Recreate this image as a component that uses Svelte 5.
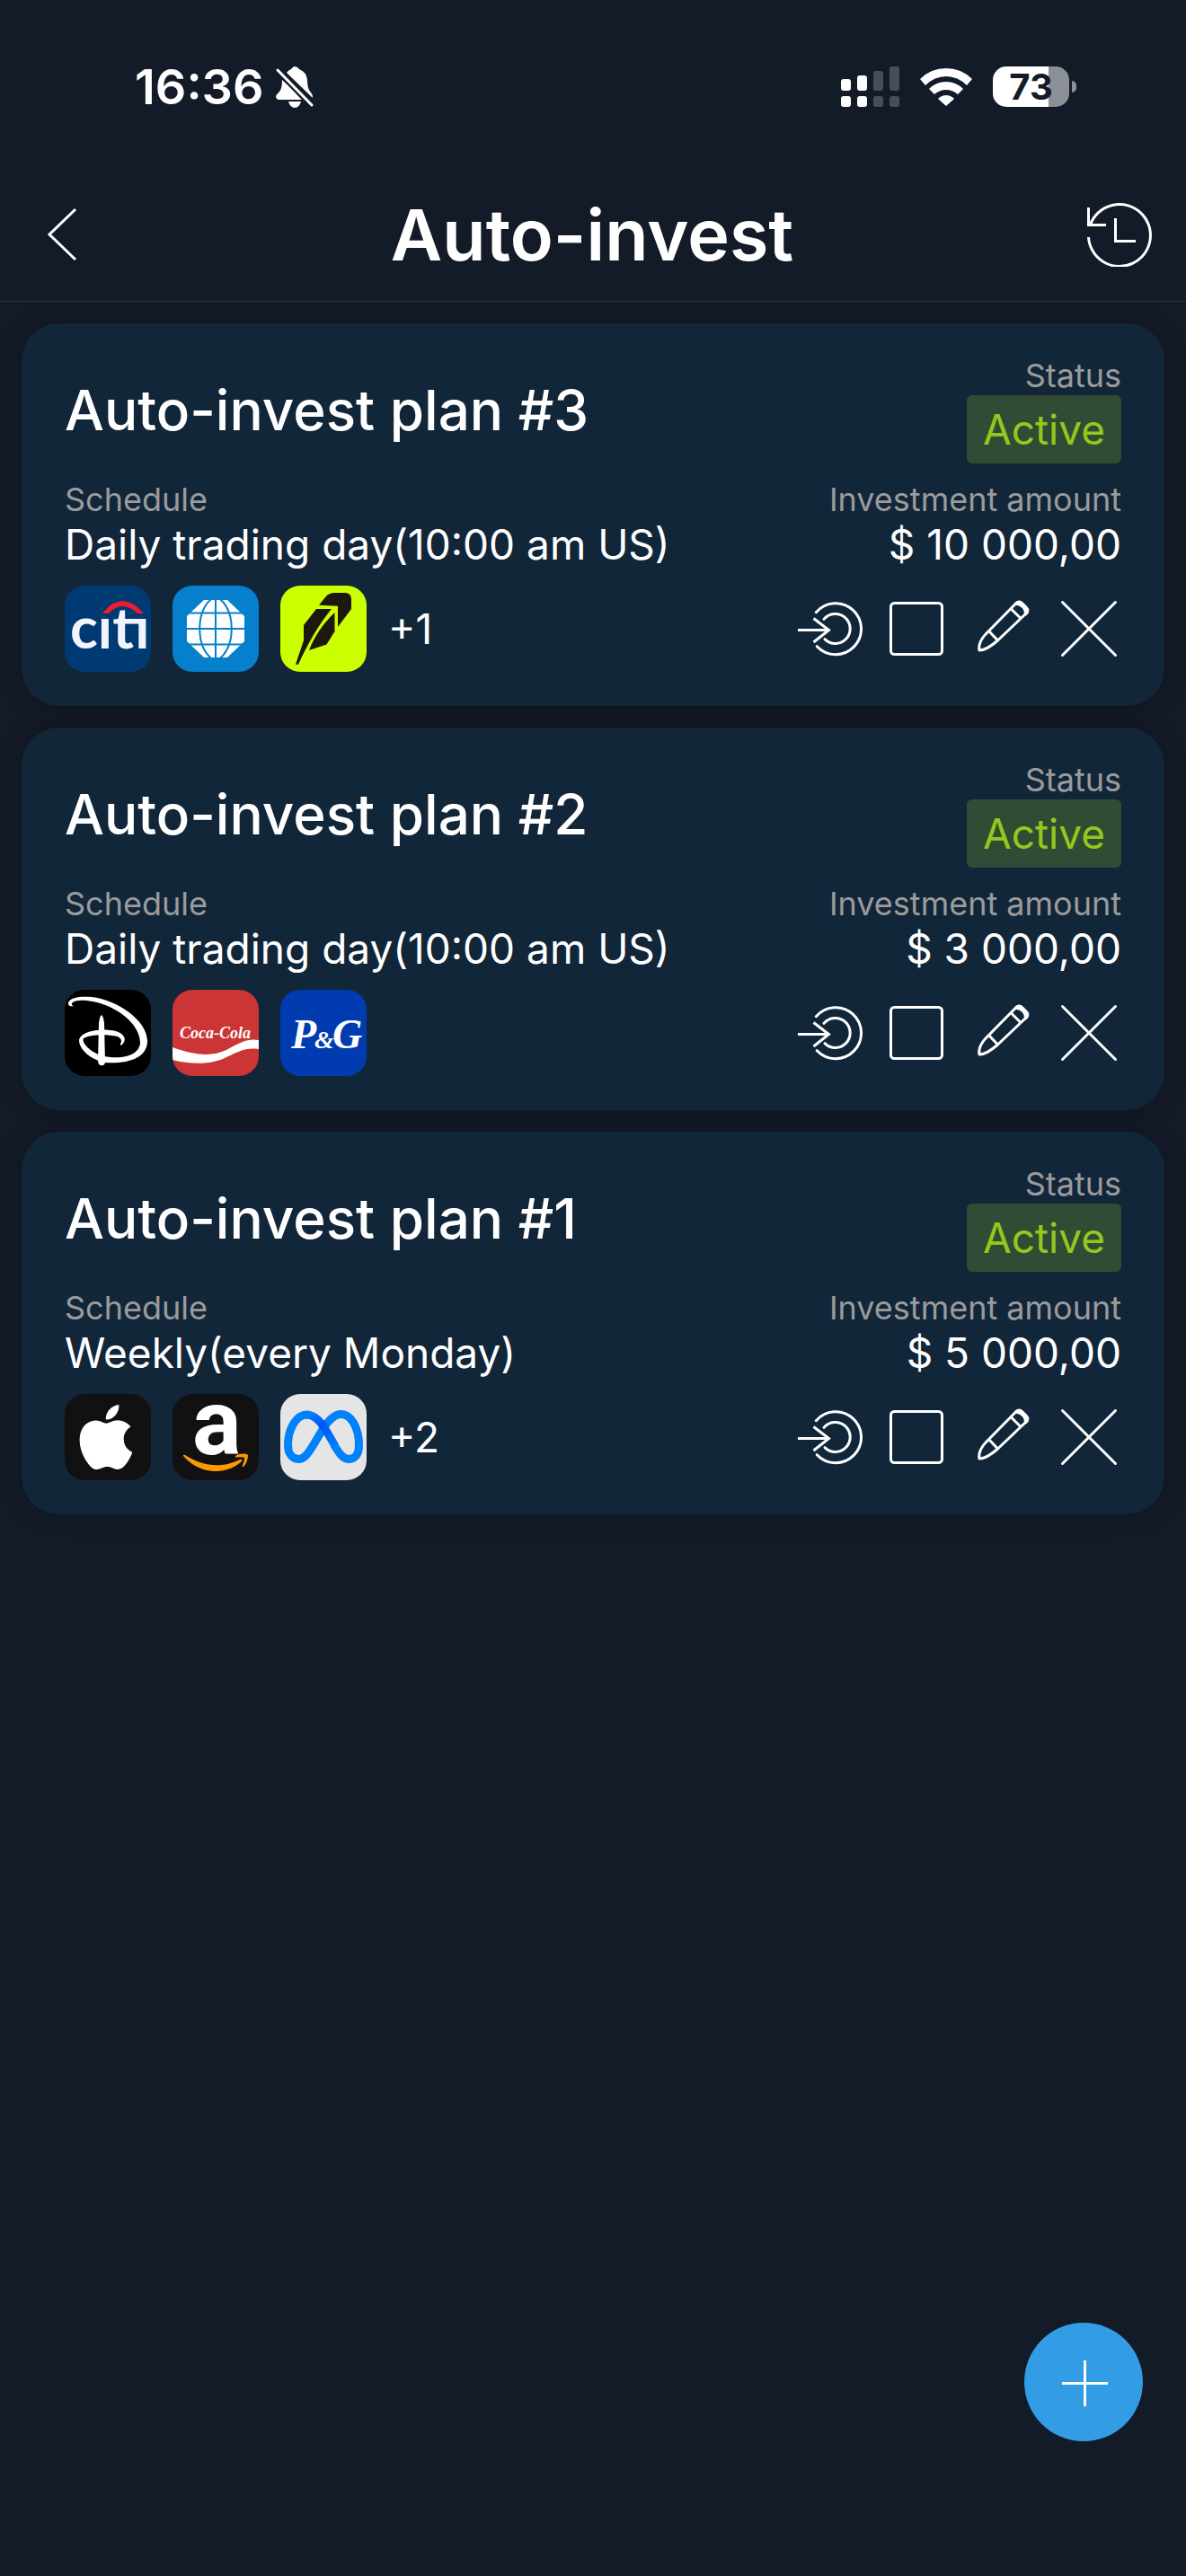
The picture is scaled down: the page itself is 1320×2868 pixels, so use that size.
<script lang="ts">
type Logo = "citi" | "globe" | "feather" | "disney" | "cola" | "pg" | "apple" | "amazon" | "meta";

interface Plan {
  id: number;
  schedule: string;
  amount: string;
  logos: Logo[];
  more: number;
}

const plans: Plan[] = [
  {
    id: 3,
    schedule: "Daily trading day(10:00 am US)",
    amount: "$ 10 000,00",
    logos: ["citi", "globe", "feather"],
    more: 1,
  },
  {
    id: 2,
    schedule: "Daily trading day(10:00 am US)",
    amount: "$ 3 000,00",
    logos: ["disney", "cola", "pg"],
    more: 0,
  },
  {
    id: 1,
    schedule: "Weekly(every Monday)",
    amount: "$ 5 000,00",
    logos: ["apple", "amazon", "meta"],
    more: 2,
  },
];
</script>

{#snippet logo(name: Logo)}
  <svg class="logo {name}" viewBox="0 0 96 96" aria-hidden="true">
    {#if name === "citi"}
      <text class="citi-text" x="6" y="70">cıtı</text>
      <path d="M42 31Q64 3 88 31H81Q64 15 49 31Z" fill="#ee1c2e" />
    {:else if name === "globe"}
      <path d="M35 16H61L80 34V62L61 80H35L16 62V34Z" fill="#fff" />
      <g fill="none" stroke="#0680cd" stroke-width="2">
        <path d="M48 15V81M15 48H81M15 30.5H81M15 65.5H81" />
        <path d="M43 15C26 30 26 66 43 81M53 15C70 30 70 66 53 81" />
      </g>
    {:else if name === "feather"}
      <g fill="#1c180d">
        <path d="M43 21.7L50 13Q53 8.5 60 8H73Q79 9 79 15V26L64 46V22.7Z" />
        <path d="M40 26H57C42 44 30 66 20 87.7H17L26 61V44Z" />
        <path d="M60.5 30V51L51.5 65.5L32 72C38 56 48 42 60.5 30Z" />
      </g>
    {:else if name === "disney"}
      <g fill="#fff">
        <path
          d="M10 18C6 19 3 17 4 14C7 8 18 7 30 8C58 11 92 34 92 57C92 76 70 83 44 81C28 77 16 66 16 56C18 46 40 42 57 46C66 49 70 55 64 61Q61 63 62 60Q65 55 59 52C46 49 27 50 21 54C18 59 30 71 44 74C64 78 83 73 84 59C84 38 58 18 31 13C20 11 11 11 8 15Q7 17 10 18Z"
        />
        <path d="M41 28Q43 29 44 37L45 81Q44 85 40 84Q38 84 37 80L38 37Q39 29 41 28Z" />
      </g>
    {:else if name === "cola"}
      <text class="cola-text" x="8" y="54">Coca-Cola</text>
      <path
        d="M0 64C28 74 44 74 60 67C76 58 84 54 96 56V66C80 64 74 69 62 74C46 83 24 84 0 78Z"
        fill="#fff"
      />
    {:else if name === "pg"}
      <text class="pg-text" y="65">
        <tspan x="12">P</tspan><tspan class="amp" x="38">&amp;</tspan><tspan x="58">G</tspan>
      </text>
    {:else if name === "apple"}
      <path
        transform="translate(10 12) scale(3)"
        fill="#fff"
        d="M12.152 6.896c-.948 0-2.415-1.078-3.96-1.04-2.04.027-3.91 1.183-4.961 3.014-2.117 3.675-.546 9.103 1.519 12.09 1.013 1.454 2.208 3.09 3.792 3.039 1.52-.065 2.09-.987 3.935-.987 1.831 0 2.35.987 3.96.948 1.637-.026 2.676-1.48 3.676-2.948 1.156-1.688 1.636-3.325 1.662-3.415-.039-.013-3.182-1.221-3.22-4.857-.026-3.04 2.48-4.494 2.597-4.559-1.429-2.09-3.623-2.324-4.39-2.376-2-.156-3.675 1.09-4.61 1.09zM15.53 3.83c.843-1.012 1.4-2.427 1.245-3.83-1.207.052-2.662.805-3.532 1.818-.78.896-1.454 2.338-1.273 3.714 1.338.104 2.715-.688 3.559-1.701"
      />
    {:else if name === "amazon"}
      <text class="amazon-text" x="22" y="67">a</text>
      <g fill="#ff9900">
        <path d="M12 69Q12 67 14 68C36 82 56 82 75 73Q78 72 77 75C60 91 30 90 12 69Z" />
        <path d="M70 69C75 66 81 66 84 68C84 73 82 78 79 81Q77 81 78 79C80 74 81 71 79 70.5Q75 70 70 70.5Z" />
      </g>
    {:else}
      <defs>
        <linearGradient id="meta-blue" gradientUnits="userSpaceOnUse" x1="30" y1="24" x2="62" y2="60">
          <stop offset="0" stop-color="#0082fb" />
          <stop offset="0.4" stop-color="#0053f5" />
          <stop offset="1" stop-color="#0082fb" />
        </linearGradient>
      </defs>
      <g fill="none" stroke="#0082fb" stroke-width="9">
        <path
          d="M30 23C17 23 8.5 40 8.5 57C8.5 66 13 72.5 20.5 72.5C26 72.5 30 68 36 58L48 38C54 29 60 22.5 67.5 22.5C79 22.5 87.5 38 87.5 57C87.5 66 84 72.5 76.5 72.5C70 72.5 66 67 60 57"
        />
        <path d="M29 23C37 23 43 28 50 39L61 58" stroke="url(#meta-blue)" />
      </g>
    {/if}
  </svg>
{/snippet}

<div class="screen">
  <div class="status-bar">
    <div class="clock">
      <span class="time">16:36</span>
      <svg width="44" height="48" viewBox="0 0 44 48" aria-hidden="true">
        <g fill="#fff">
          <path d="M8 16L32 38H4Q1 37 1 34Q2 32 5 29Q8 26 8 16Z" />
          <path d="M13 8Q15 5 18 4Q20 1 22 1Q25 1 27 4Q35 7 36 16Q36 26 40 30Q42 32 42 36Z" />
          <path d="M15 40H29Q27 47 22 47Q17 47 15 40Z" />
        </g>
        <path d="M3 4L41 44" stroke="#141b28" stroke-width="8" />
        <path d="M3 5L41 44" stroke="#fff" stroke-width="3" stroke-linecap="round" />
      </svg>
    </div>
    <div class="indicators">
      <svg width="65" height="45" viewBox="0 0 65 45" fill="#fff" aria-hidden="true">
        <rect y="14" width="11" height="13" rx="3" />
        <rect x="18" y="10" width="11" height="17" rx="3" />
        <rect y="33" width="11" height="12" rx="3" />
        <rect x="18" y="33" width="11" height="12" rx="3" />
        <g opacity="0.22">
          <rect x="36" y="5" width="11" height="22" rx="3" />
          <rect x="54" width="11" height="27" rx="3" />
          <rect x="36" y="33" width="11" height="12" rx="3" />
          <rect x="54" y="33" width="11" height="12" rx="3" />
        </g>
      </svg>
      <svg width="58" height="44" viewBox="0 0 58 44" fill="#fff" aria-hidden="true">
        <path d="M0 13Q12 1 29 1Q46 1 58 13L52 20Q42 10 29 10Q16 10 6 20Z" />
        <path d="M10 24Q18 16 29 16Q40 16 48 24L42 30Q36 25 29 25Q22 25 16 30Z" />
        <path d="M20 35Q24 31 29 31Q34 31 38 35L29 43Z" />
      </svg>
      <div class="battery"><span>73</span></div>
    </div>
  </div>

  <header>
    <button class="nav-button" aria-label="Back">
      <svg width="72" height="72" viewBox="0 0 72 72" aria-hidden="true">
        <path d="M48 8L19 36L48 64" />
      </svg>
    </button>
    <h1>Auto-invest</h1>
    <button class="nav-button" aria-label="History">
      <svg width="72" height="72" viewBox="0 0 72 72" aria-hidden="true">
        <path d="M1.5 39A34.5 34.5 0 1 0 3.6 25M1.5 6V25.5H21M31.5 18V43.5H54" />
      </svg>
    </button>
  </header>

  <main>
    {#each plans as plan (plan.id)}
      <article>
        <div class="row">
          <h2>Auto-invest plan #{plan.id}</h2>
          <div class="field end">
            <span class="label">Status</span>
            <span class="badge">Active</span>
          </div>
        </div>
        <div class="row">
          <div class="field">
            <span class="label">Schedule</span>
            <span class="value">{plan.schedule}</span>
          </div>
          <div class="field end">
            <span class="label">Investment amount</span>
            <span class="value">{plan.amount}</span>
          </div>
        </div>
        <div class="row">
          <div class="logos">
            {#each plan.logos as name (name)}
              {@render logo(name)}
            {/each}
            {#if plan.more}<span class="value">+{plan.more}</span>{/if}
          </div>
          <div class="actions">
            <button aria-label="Invest now">
              <svg width="72" height="72" viewBox="0 0 72 72" aria-hidden="true">
                <path d="M20.3 17.7A28.5 28.5 0 1 1 21.3 55.7" stroke-linecap="round" />
                <path d="M29 25.4A16.5 16.5 0 1 1 30 47.6" stroke-linecap="round" />
                <path d="M0 37.5H34M17.5 24.5L34.5 37.5L17.5 51" />
              </svg>
            </button>
            <button aria-label="Stop">
              <svg width="72" height="72" viewBox="0 0 72 72" aria-hidden="true">
                <rect x="7.5" y="7.5" width="57" height="57" rx="4" />
              </svg>
            </button>
            <button aria-label="Edit">
              <svg class="pencil" width="72" height="72" viewBox="0 0 72 72" aria-hidden="true">
                <path d="M20.5 38.5L51 7.5Q54 5 57 8L62 13Q65 16 62 19L30.5 49Q18 60 10 60Q8 50 20.5 38.5Z" />
                <path d="M20.5 38.5L30.5 49M45.5 14L56 24.5" />
                <path class="cap" d="M50.5 8Q54 4 58 8L62 12Q66 16 61.5 20Q62 10 50.5 8Z" />
              </svg>
            </button>
            <button aria-label="Delete">
              <svg width="72" height="72" viewBox="0 0 72 72" aria-hidden="true">
                <path d="M6.5 6.5L65.5 65.5M65.5 6.5L6.5 65.5" stroke-linecap="round" />
              </svg>
            </button>
          </div>
        </div>
      </article>
    {/each}
  </main>

  <button class="fab" aria-label="Add plan">
    <svg width="54" height="54" viewBox="0 0 54 54" aria-hidden="true">
      <path d="M3 28.5H54M28.5 3V54" />
    </svg>
  </button>
</div>

<style>
  :global(body) {
    background: #141b28;
  }
  .screen {
    min-height: 100vh;
    font-family: Inter, sans-serif;
    color: #fff;
  }
  svg {
    display: block;
    flex: none;
  }
  button {
    display: flex;
    align-items: center;
    justify-content: center;
    padding: 0;
    border: 0;
    background: none;
    color: inherit;
  }
  button svg {
    fill: none;
    stroke: currentColor;
    stroke-width: 3;
  }

  .status-bar {
    display: flex;
    justify-content: space-between;
    padding: 74px 130px 67px 150px;
  }
  .clock,
  .indicators {
    display: flex;
    align-items: center;
    height: 45px;
  }
  .clock {
    gap: 12px;
  }
  .time {
    font-size: 54px;
    font-weight: 600;
  }
  .indicators {
    gap: 23px;
  }
  .battery {
    position: relative;
    width: 85px;
    height: 45px;
    border-radius: 15px;
    background: linear-gradient(90deg, #fff 73%, #8b8f96 73%);
    color: #141b28;
    font-size: 40px;
    font-weight: 700;
    line-height: 45px;
    text-align: center;
  }
  .battery::after {
    content: "";
    position: absolute;
    top: 16px;
    right: -8px;
    width: 5px;
    height: 13px;
    border-radius: 0 5px 5px 0;
    background: #8b8f96;
  }

  header {
    display: grid;
    grid-template-columns: 72px 1fr 72px;
    align-items: center;
    height: 149px;
    padding: 0 38px 0 36px;
    border-bottom: 1px solid #2d3340;
  }
  h1 {
    margin: 0;
    font-size: 79px;
    font-weight: 600;
    text-align: center;
  }

  main {
    display: flex;
    flex-direction: column;
    gap: 24px;
    padding: 24px;
  }
  article {
    display: flex;
    flex-direction: column;
    gap: 18px;
    padding: 36px 48px 38px;
    border-radius: 42px;
    background: #12263a;
    box-shadow: 0 0 24px rgba(0, 0, 0, 0.3);
  }
  .row {
    display: flex;
    align-items: center;
    justify-content: space-between;
  }
  h2 {
    margin: 0;
    font-size: 62px;
    font-weight: 500;
  }
  .field {
    display: flex;
    flex-direction: column;
    align-items: flex-start;
  }
  .field.end {
    align-items: flex-end;
  }
  .label {
    color: #9b9b9b;
    font-size: 36px;
    line-height: 44px;
  }
  .value {
    font-size: 46px;
    line-height: 56px;
  }
  .badge {
    padding: 0 18px;
    border-radius: 6px;
    background: #324b34;
    color: #93c81e;
    font-size: 46px;
    line-height: 76px;
  }

  .logos,
  .actions {
    display: flex;
    align-items: center;
    gap: 24px;
  }
  .logo {
    width: 96px;
    height: 96px;
    border-radius: 22px;
    background: #111;
    fill: #fff;
  }
  .citi {
    background: #003a72;
  }
  .globe {
    background: #0680cd;
  }
  .feather {
    background: #cf0;
  }
  .disney {
    background: #000;
  }
  .cola {
    background: #cb3535;
  }
  .pg {
    background: #003bb0;
  }
  .meta {
    background: #e5e5e5;
  }
  .citi-text {
    fill: #f0f4fc;
    font: 700 64px Lato, sans-serif;
  }
  .cola-text {
    font: italic 700 18px "Liberation Serif", serif;
  }
  .pg-text {
    font: italic 700 46px "Liberation Serif", serif;
  }
  .amp {
    font-size: 28px;
  }
  .amazon-text {
    font: 700 102px Roboto, sans-serif;
  }
  .pencil {
    stroke-linejoin: round;
  }
  .cap {
    fill: currentColor;
  }

  .fab {
    position: fixed;
    right: 48px;
    bottom: 150px;
    width: 132px;
    height: 132px;
    border-radius: 50%;
    background: #329ce5;
  }
</style>
